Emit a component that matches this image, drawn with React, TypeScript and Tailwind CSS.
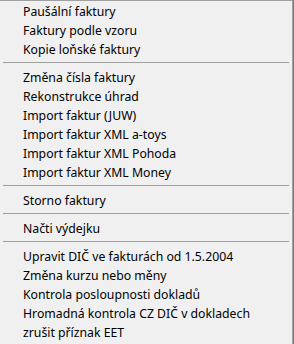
const sections: string[][] = [
  ["Paušální faktury", "Faktury podle vzoru", "Kopie loňské faktury"],
  [
    "Změna čísla faktury",
    "Rekonstrukce úhrad",
    "Import faktur (JUW)",
    "Import faktur XML a-toys",
    "Import faktur XML Pohoda",
    "Import faktur XML Money",
  ],
  ["Storno faktury"],
  ["Načti výdejku"],
  [
    "Upravit DIČ ve fakturách od 1.5.2004",
    "Změna kurzu nebo měny",
    "Kontrola posloupnosti dokladů",
    "Hromadná kontrola CZ DIČ v dokladech",
    "zrušit příznak EET",
  ],
];

const MenuItem = ({ label }: { label: string }) => (
  <div className="h-[19px] flex items-center pl-[23px] text-[12.25px] leading-none text-black whitespace-nowrap">
    {label}
  </div>
);

const Separator = () => (
  <div className="h-[9px] pt-[2px] pl-[3px] pr-[3px]">
    <div className="h-px bg-[#a0a0a0]" />
  </div>
);

export default function App() {
  return (
    <div className="w-[294px] h-[344px] overflow-hidden flex bg-[#7a7a7a] font-['Noto_Sans','Liberation_Sans',sans-serif]">
      <div className="w-[293px] h-full bg-[#f0f0f0] border-t border-r border-[#a0a0a0] pt-[2px]">
        {sections.map((items, i) => (
          <div key={i}>
            {i > 0 && <Separator />}
            {items.map((label) => (
              <MenuItem key={label} label={label} />
            ))}
          </div>
        ))}
      </div>
    </div>
  );
}
